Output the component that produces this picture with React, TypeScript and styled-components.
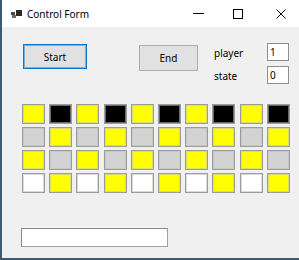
import React from "react";
import styled, { createGlobalStyle } from "styled-components";

const Global = createGlobalStyle`
  html, body { margin: 0; padding: 0; background: #ffffff; }
  body { font-family: "Noto Sans", "Open Sans", sans-serif; }
  * { box-sizing: border-box; }
`;

const Window = styled.div`
  width: 299px;
  height: 260px;
  display: flex;
  flex-direction: column;
  border-left: 2px solid #3d5a70;
  border-bottom: 2px solid #3d5a70;
  overflow: hidden;
  background: #f0f0f0;
`;

const TitleBar = styled.div`
  height: 27px;
  flex-shrink: 0;
  display: flex;
  align-items: stretch;
  background: #ffffff;
`;

const TitleArea = styled.div`
  flex: 1;
  min-width: 0;
  display: flex;
  align-items: center;
  padding: 1px 0 0 9px;
  gap: 5px;
`;

const TitleText = styled.span`
  font-size: 10px;
  color: #000000;
  white-space: nowrap;
`;

const CaptionButton = styled.div<{ $w: number; $mr?: number }>`
  width: ${(p) => p.$w}px;
  flex-shrink: 0;
  margin-right: ${(p) => p.$mr ?? 0}px;
  display: flex;
  align-items: center;
  justify-content: center;
`;

const Content = styled.div`
  flex: 1;
  display: flex;
  flex-direction: column;
  align-items: flex-start;
  padding: 16px 0 0 20px;
`;

const TopRow = styled.div`
  display: flex;
  align-items: flex-start;
`;

const FormButton = styled.button<{ $focused?: boolean; $w: number; $h: number; $mt: number; $ml: number }>`
  width: ${(p) => p.$w}px;
  height: ${(p) => p.$h}px;
  margin: ${(p) => p.$mt}px 0 0 ${(p) => p.$ml}px;
  padding: 0;
  background: #e1e1e1;
  border: 1px solid ${(p) => (p.$focused ? "#0078d7" : "#adadad")};
  box-shadow: ${(p) => (p.$focused ? "inset 0 0 0 1px rgba(0,120,215,0.45)" : "none")};
  font-family: "Noto Sans", "Open Sans", sans-serif;
  font-size: 10px;
  color: #000000;
  display: flex;
  align-items: center;
  justify-content: center;
`;

const FieldGrid = styled.div`
  margin-left: 16px;
  display: grid;
  grid-template-columns: 53px 22px;
  grid-auto-rows: 18px;
  row-gap: 5px;
`;

const FieldLabel = styled.span`
  font-size: 10px;
  color: #000000;
  align-self: center;
  line-height: 1;
  padding-top: 1px;
`;

const FieldBox = styled.div`
  width: 22px;
  height: 18px;
  background: #ffffff;
  border: 1px solid #8f8f8f;
  font-size: 10px;
  color: #000000;
  display: flex;
  align-items: center;
  padding-left: 2px;
`;

const CellGrid = styled.div`
  margin-top: 20px;
  display: grid;
  grid-template-columns: repeat(10, 23px);
  grid-auto-rows: 20px;
  column-gap: 4.2px;
  row-gap: 3px;
`;

const Cell = styled.div<{ $c: string }>`
  background: ${(p) => p.$c};
  border: 1px solid #9c9c9c;
  box-shadow: inset 0 0 0 1px rgba(190, 190, 190, 0.55);
`;

const StatusBox = styled.div`
  margin: 35px 0 0 -1px;
  width: 147px;
  height: 19px;
  background: #ffffff;
  border: 1px solid #a0a0a0;
  border-top-color: #8a8a8a;
  border-left-color: #8a8a8a;
`;

const Y = "#ffff00";
const B = "#000000";
const G = "#d3d3d3";
const W = "#ffffff";

const rows: string[][] = [
  [Y, B],
  [G, Y],
  [Y, G],
  [W, Y],
].map(([a, b]) => Array.from({ length: 10 }, (_, i) => (i % 2 === 0 ? a : b)));

export default function App() {
  return (
    <>
      <Global />
      <Window>
        <TitleBar>
          <TitleArea>
            <svg width="11" height="8" viewBox="0 0 11 8">
              <rect x="5" y="0" width="6" height="6" fill="#2a2a2a" />
              <rect x="0" y="2" width="4" height="3" fill="#4a4a4a" />
              <rect x="1" y="5" width="4" height="3" fill="#6a6a6a" />
            </svg>
            <TitleText>Control Form</TitleText>
          </TitleArea>
          <CaptionButton $w={40}>
            <svg width="11" height="1" viewBox="0 0 11 1">
              <rect x="0" y="0" width="11" height="1" fill="#000" />
            </svg>
          </CaptionButton>
          <CaptionButton $w={40}>
            <svg width="10" height="10" viewBox="0 0 10 10">
              <rect x="0.5" y="0.5" width="9" height="9" fill="none" stroke="#000" strokeWidth="1" />
            </svg>
          </CaptionButton>
          <CaptionButton $w={45} $mr={-4}>
            <svg width="10" height="10" viewBox="0 0 10 10">
              <path d="M0.5 0.5 L9.5 9.5 M9.5 0.5 L0.5 9.5" stroke="#000" strokeWidth="1" />
            </svg>
          </CaptionButton>
        </TitleBar>
        <Content>
          <TopRow>
            <FormButton $focused $w={64} $h={25} $mt={1} $ml={1}>
              Start
            </FormButton>
            <FormButton $w={59} $h={26} $mt={2} $ml={52}>
              End
            </FormButton>
            <FieldGrid>
              <FieldLabel>player</FieldLabel>
              <FieldBox>1</FieldBox>
              <FieldLabel>state</FieldLabel>
              <FieldBox>0</FieldBox>
            </FieldGrid>
          </TopRow>
          <CellGrid>
            {rows.flatMap((r, ri) => r.map((c, ci) => <Cell key={`${ri}-${ci}`} $c={c} />))}
          </CellGrid>
          <StatusBox />
        </Content>
      </Window>
    </>
  );
}
